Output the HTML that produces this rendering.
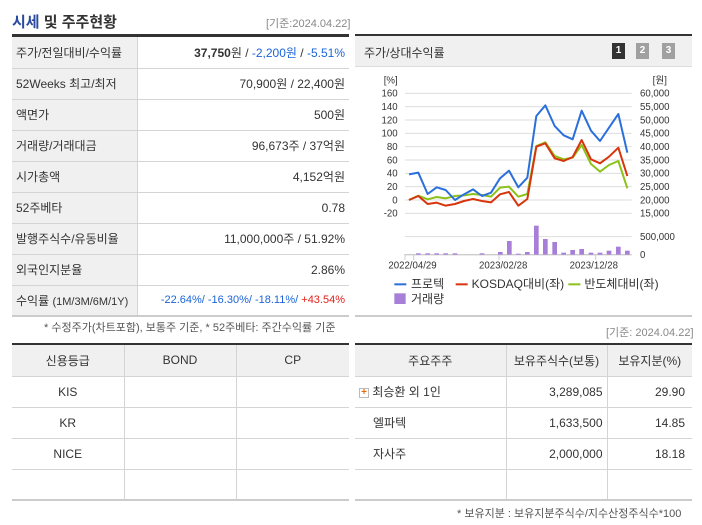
<!DOCTYPE html>
<html><head><meta charset="utf-8"><style>
*{margin:0;padding:0;box-sizing:border-box}
body{width:702px;height:525px;background:#fff;font-family:"Liberation Sans","Noto Sans CJK KR",sans-serif;font-size:12px;color:#333;position:relative;overflow:hidden}
.a{position:absolute}
table{border-collapse:collapse;position:absolute;table-layout:fixed}
td{height:31px;border-bottom:1px solid #d4d4d4;font-size:12px;color:#333;white-space:nowrap}
.lab{background:#f0f0f0;padding-left:4px;border-right:1px solid #d4d4d4}
.val{text-align:right;padding-right:4px}
.blue{color:#1b64d8}.red{color:#e0201a}
.bt td{text-align:center;border-right:1px solid #d4d4d4}
.bt td:last-child{border-right:none}
.bt tr.h td{background:#f0f0f0}
.st td{border-right:1px solid #d4d4d4}
.st td:last-child{border-right:none}
.st tr.h td{background:#f0f0f0;text-align:center}
.btn{position:absolute;top:43px;width:13px;height:16px;color:#fff;font-weight:bold;font-size:10px;text-align:center;line-height:16px}
</style></head><body>
<div class="a" style="left:12px;top:11px;font-size:15px;font-weight:bold;color:#333"><span style="color:#2a4a9f">시세</span> 및 주주현황</div>
<div class="a" style="left:266px;top:15px;font-size:11px;color:#888">[기준:2024.04.22]</div>
<div class="a" style="left:12px;top:34px;width:337px;height:3px;background:#333"></div>
<table style="left:12px;top:37px;width:337px">
<col style="width:125px"><col>
<tr><td class="lab">주가/전일대비/수익률</td><td class="val"><b>37,750</b>원 / <span class="blue">-2,200원</span> / <span class="blue">-5.51%</span></td></tr>
<tr><td class="lab">52Weeks 최고/최저</td><td class="val">70,900원 / 22,400원</td></tr>
<tr><td class="lab">액면가</td><td class="val">500원</td></tr>
<tr><td class="lab">거래량/거래대금</td><td class="val">96,673주 / 37억원</td></tr>
<tr><td class="lab">시가총액</td><td class="val">4,152억원</td></tr>
<tr><td class="lab">52주베타</td><td class="val">0.78</td></tr>
<tr><td class="lab">발행주식수/유동비율</td><td class="val">11,000,000주 / 51.92%</td></tr>
<tr><td class="lab">외국인지분율</td><td class="val">2.86%</td></tr>
<tr><td class="lab" style="border-bottom:2px solid #ccc">수익률 <span style="font-size:11px">(1M/3M/6M/1Y)</span></td><td class="val" style="border-bottom:2px solid #ccc;font-size:11px"><span class="blue">-22.64%/ -16.30%/ -18.11%/</span> <span class="red">+43.54%</span></td></tr>
</table>
<div class="a" style="left:44px;top:319px;font-size:11px;color:#555">* 수정주가(차트포함), 보통주 기준, * 52주베타: 주간수익률 기준</div>

<div class="a" style="left:12px;top:343px;width:337px;height:2px;background:#333"></div>
<table class="bt" style="left:12px;top:345px;width:337px">
<col style="width:112px"><col style="width:112px"><col>
<tr class="h"><td>신용등급</td><td>BOND</td><td>CP</td></tr>
<tr><td>KIS</td><td></td><td></td></tr>
<tr><td>KR</td><td></td><td></td></tr>
<tr><td>NICE</td><td></td><td></td></tr>
<tr><td style="border-bottom:2px solid #ccc"></td><td style="border-bottom:2px solid #ccc"></td><td style="border-bottom:2px solid #ccc"></td></tr>
</table>

<div class="a" style="left:355px;top:34px;width:337px;height:2px;background:#333"></div>
<div class="a" style="left:355px;top:36px;width:337px;height:31px;background:#f0f0f0;border-bottom:1px solid #ddd"></div>
<div class="a" style="left:364px;top:44px;font-size:12px">주가/상대수익률</div>
<div class="btn" style="left:612px;background:#333">1</div>
<div class="btn" style="left:636px;background:#a0a0a0">2</div>
<div class="btn" style="left:662px;background:#a0a0a0">3</div>

<svg class="a" style="left:355px;top:30px" width="347" height="280" viewBox="0 0 1041 840">
<g stroke="#ddd" stroke-width="3">
<line x1="150" x2="830" y1="190" y2="190"/><line x1="150" x2="830" y1="230" y2="230"/><line x1="150" x2="830" y1="270" y2="270"/><line x1="150" x2="830" y1="310" y2="310"/><line x1="150" x2="830" y1="350" y2="350"/><line x1="150" x2="830" y1="390" y2="390"/><line x1="150" x2="830" y1="430" y2="430"/><line x1="150" x2="830" y1="470" y2="470"/><line x1="150" x2="830" y1="510" y2="510"/><line x1="150" x2="830" y1="550" y2="550"/><line x1="150" x2="830" y1="620" y2="620"/>
</g>
<line x1="148" x2="830" y1="674" y2="674" stroke="#ccc" stroke-width="4"/>
<g stroke="#ccc" stroke-width="3"><line x1="150" x2="150" y1="674" y2="690"/><line x1="176" x2="176" y1="674" y2="690"/><line x1="432" x2="432" y1="674" y2="690"/><line x1="722" x2="722" y1="674" y2="690"/></g>
<g font-size="29" fill="#333" font-family="Liberation Sans,sans-serif" text-anchor="end">
<text x="128" y="160">[%]</text>
<text x="128" y="200">160</text><text x="128" y="240">140</text><text x="128" y="280">120</text><text x="128" y="320">100</text><text x="128" y="360">80</text><text x="128" y="400">60</text><text x="128" y="440">40</text><text x="128" y="480">20</text><text x="128" y="520">0</text><text x="128" y="560">-20</text>
</g>
<g font-size="29" fill="#333" font-family="Liberation Sans,sans-serif">
<text x="893" y="160">[원]</text>
<text x="855" y="200">60,000</text><text x="855" y="240">55,000</text><text x="855" y="280">50,000</text><text x="855" y="320">45,000</text><text x="855" y="360">40,000</text><text x="855" y="400">35,000</text><text x="855" y="440">30,000</text><text x="855" y="480">25,000</text><text x="855" y="520">20,000</text><text x="855" y="560">15,000</text>
<text x="855" y="630">500,000</text><text x="855" y="684">0</text>
<text x="100" y="716">2022/04/29</text><text x="372" y="716">2023/02/28</text><text x="644" y="716">2023/12/28</text>
</g>
<g fill="#a77ed8">
<rect x="183" y="670" width="14" height="4"/><rect x="211" y="670" width="14" height="4"/><rect x="238" y="670" width="14" height="4"/><rect x="265" y="670" width="14" height="4"/><rect x="293" y="670" width="14" height="4"/><rect x="374" y="670" width="14" height="4"/>
<rect x="429" y="666" width="14" height="8"/><rect x="456" y="633" width="14" height="41"/><rect x="483" y="671" width="14" height="3"/><rect x="510" y="666" width="14" height="8"/><rect x="537" y="587" width="14" height="87"/><rect x="564" y="627" width="14" height="47"/><rect x="592" y="636" width="14" height="38"/><rect x="619" y="668" width="14" height="6"/><rect x="646" y="660" width="14" height="14"/><rect x="673" y="657" width="14" height="17"/><rect x="701" y="668" width="14" height="6"/><rect x="728" y="668" width="14" height="6"/><rect x="755" y="662" width="14" height="12"/><rect x="783" y="650" width="14" height="24"/><rect x="810" y="662" width="14" height="12"/>
</g>
<g fill="none" stroke-width="6" stroke-linejoin="round">
<polyline stroke="#8cc21a" points="162,510 190,497 218,508 245,501 272,505 300,498 327,496 354,492 381,495 408,500 435,473 462,470 490,500 517,492 544,348 571,337 599,378 626,388 653,383 680,345 708,402 735,425 762,405 790,393 817,475"/>
<polyline stroke="#d8350e" points="162,510 190,498 218,522 245,518 272,527 300,522 327,513 354,507 381,513 408,517 435,493 462,486 490,527 517,507 544,350 571,340 599,385 626,393 653,381 680,330 708,388 735,400 762,380 790,353 817,438"/>
<polyline stroke="#2a6fdb" points="162,433 190,428 218,492 245,472 272,480 300,510 327,493 354,478 381,498 408,488 435,445 462,422 490,472 517,443 544,258 571,226 599,288 626,316 653,328 680,242 708,302 735,333 762,293 790,252 817,368"/>
</g>
<g font-size="36" fill="#333">
<rect x="118" y="760" width="36" height="6" fill="#2a6fdb"/><text x="168" y="774">프로텍</text>
<rect x="302" y="760" width="36" height="6" fill="#d8350e"/><text x="350" y="774">KOSDAQ대비(좌)</text>
<rect x="640" y="760" width="36" height="6" fill="#8cc21a"/><text x="688" y="774">반도체대비(좌)</text>
<rect x="118" y="790" width="34" height="32" fill="#a77ed8"/><text x="168" y="819">거래량</text>
</g>
</svg>

<div class="a" style="left:355px;top:315px;width:337px;height:2px;background:#ccc"></div>
<div class="a" style="left:606px;top:324px;font-size:11px;color:#888">[기준: 2024.04.22]</div>
<div class="a" style="left:355px;top:343px;width:337px;height:2px;background:#333"></div>
<table class="st" style="left:355px;top:345px;width:337px">
<col style="width:151px"><col style="width:101px"><col>
<tr class="h"><td>주요주주</td><td>보유주식수(보통)</td><td>보유지분(%)</td></tr>
<tr><td style="padding-left:4px"><span style="display:inline-block;width:10px;height:10px;border:1px solid #bbb;background:#fff;color:#e86a10;font-size:10px;line-height:8px;text-align:center;font-weight:bold;vertical-align:middle">+</span> 최승환 외 1인</td><td class="val">3,289,085</td><td class="val" style="padding-right:7px">29.90</td></tr>
<tr><td style="padding-left:18px">엘파텍</td><td class="val">1,633,500</td><td class="val" style="padding-right:7px">14.85</td></tr>
<tr><td style="padding-left:18px">자사주</td><td class="val">2,000,000</td><td class="val" style="padding-right:7px">18.18</td></tr>
<tr><td style="border-bottom:2px solid #ccc"></td><td style="border-bottom:2px solid #ccc"></td><td style="border-bottom:2px solid #ccc"></td></tr>
</table>
<div class="a" style="left:457px;top:505px;font-size:11px;color:#555">* 보유지분 : 보유지분주식수/지수산정주식수*100</div>
</body></html>
